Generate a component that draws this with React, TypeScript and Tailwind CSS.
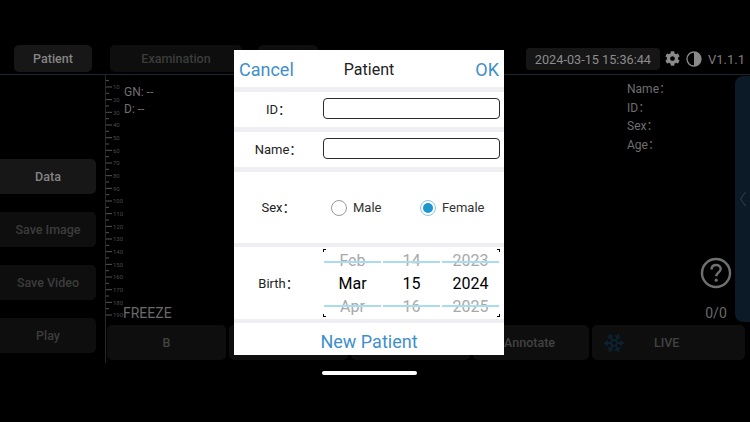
import { Snowflake } from "lucide-react";
import { FaCog } from "react-icons/fa";

const rulerMarks = Array.from({ length: 39 }, (_, i) => i);
const blue = "text-[#3f8fca]";

function SideButton({ label, active }: { label: string; active?: boolean }) {
  return (
    <div
      className={`flex h-[35px] w-[96px] items-center justify-center rounded-r-[5px] pt-[1px] text-[12.5px] font-medium ${
        active ? "bg-[#171717] text-[#858585]" : "bg-[#0e0e0e] text-[#3c3c3c]"
      }`}
    >
      {label}
    </div>
  );
}

function BottomButton({ label }: { label: string }) {
  return (
    <div className="flex h-full w-[119px] items-center justify-center rounded-[5px] bg-[#0e0e0e] pt-[1px] text-[12.5px] font-medium text-[#424242]">
      {label}
    </div>
  );
}

function Ruler() {
  return (
    <svg width="26" height="250" className="shrink-0" viewBox="0 0 26 250">
      {rulerMarks.map((i) => {
        const y = i * 6.335 - 0.7;
        const major = i % 2 === 0 && i > 0;
        return (
          <g key={i}>
            <line x1="0" x2={major ? 6 : 3} y1={y} y2={y} stroke="#565656" strokeWidth="1" />
            {major && (
              <text x="7" y={y + 2.2} fontSize="6" fill="#4a4a4a" fontFamily="Roboto, sans-serif">
                {i * 5}
              </text>
            )}
          </g>
        );
      })}
    </svg>
  );
}

function FormLabel({ children }: { children: string }) {
  return <div className="mt-[1px] w-[89px] shrink-0 text-center text-[13px] text-[#222]">{children}</div>;
}

function Separator({ h }: { h: string }) {
  return <div className={`${h} shrink-0 bg-[#eeeef3]`} />;
}

function PickerColumn({ values }: { values: string[] }) {
  return (
    <div className="flex h-full flex-1 flex-col items-center justify-center gap-[2px] text-[16px] leading-[21px]">
      <span className="text-[#a9a9a9]">{values[0]}</span>
      <span className="text-black">{values[1]}</span>
      <span className="text-[#a9a9a9]">{values[2]}</span>
    </div>
  );
}

function Radio({ label, checked }: { label: string; checked?: boolean }) {
  return (
    <div className="flex items-center gap-[6px] text-[13px] text-[#333]">
      <span
        className={`flex h-[16px] w-[16px] items-center justify-center rounded-full border ${
          checked ? "border-[#8fc4de]" : "border-[#9a9a9a]"
        }`}
      >
        {checked && <span className="h-[10px] w-[10px] rounded-full bg-[#1e96cf]" />}
      </span>
      {label}
    </div>
  );
}

function PatientModal() {
  return (
    <div className="absolute left-[234px] top-[50px] flex h-[305px] w-[270px] flex-col bg-white">
      <div className="flex h-[37px] shrink-0 items-center px-[5px] pt-[2px]">
        <span className={`flex-1 text-[18px] ${blue}`}>Cancel</span>
        <span className="text-[16px] text-[#222]">Patient</span>
        <span className={`flex-1 text-right text-[18px] ${blue}`}>OK</span>
      </div>
      <Separator h="h-[5px]" />
      <div className="flex h-[35px] shrink-0 items-center">
        <FormLabel>ID：</FormLabel>
        <div className="mb-[2px] h-[21px] w-[177px] rounded-[4px] border-[1.5px] border-[#2a2a2a]" />
      </div>
      <Separator h="h-[5px]" />
      <div className="flex h-[35px] shrink-0 items-center">
        <FormLabel>Name：</FormLabel>
        <div className="mb-[2px] h-[21px] w-[177px] rounded-[4px] border-[1.5px] border-[#2a2a2a]" />
      </div>
      <Separator h="h-[5px]" />
      <div className="flex h-[71px] shrink-0 items-center">
        <FormLabel>Sex：</FormLabel>
        <div className="ml-[8px] w-[89px]">
          <Radio label="Male" />
        </div>
        <Radio label="Female" checked />
      </div>
      <Separator h="h-[4px]" />
      <div className="flex h-[72px] shrink-0 items-center">
        <FormLabel>Birth：</FormLabel>
        <div className="relative h-[68px] w-[177px] overflow-hidden">
          <div className="flex h-full">
            <PickerColumn values={["Feb", "Mar", "Apr"]} />
            <PickerColumn values={["14", "15", "16"]} />
            <PickerColumn values={["2023", "2024", "2025"]} />
          </div>
          <div className="absolute inset-x-[1px] top-[12px] flex gap-[2px]">
            <div className="h-[1.5px] flex-1 bg-[#a9dcee]" />
            <div className="h-[1.5px] flex-1 bg-[#a9dcee]" />
            <div className="h-[1.5px] flex-1 bg-[#a9dcee]" />
          </div>
          <div className="absolute inset-x-[1px] top-[56px] flex gap-[2px]">
            <div className="h-[1.5px] flex-1 bg-[#a9dcee]" />
            <div className="h-[1.5px] flex-1 bg-[#a9dcee]" />
            <div className="h-[1.5px] flex-1 bg-[#a9dcee]" />
          </div>
          <span className="absolute left-0 top-0 h-[3px] w-[3px] border-l border-t border-black" />
          <span className="absolute right-0 top-0 h-[3px] w-[3px] border-r border-t border-black" />
          <span className="absolute bottom-0 left-0 h-[3px] w-[3px] border-b border-l border-black" />
          <span className="absolute bottom-0 right-0 h-[3px] w-[3px] border-b border-r border-black" />
        </div>
      </div>
      <Separator h="h-[4px]" />
      <div className={`flex flex-1 items-center justify-center pt-[4px] text-[18px] ${blue}`}>New Patient</div>
    </div>
  );
}

export default function App() {
  return (
    <div
      className="relative h-[422px] w-[750px] overflow-hidden bg-black pt-[45px]"
      style={{ fontFamily: "Roboto, 'Noto Sans CJK SC', sans-serif" }}
    >
      {/* Top bar */}
      <div className="flex h-[30px] items-start border-b border-[#1b2630] pl-[14px] pr-[5px]">
        <div className="flex h-[27px] w-[78px] items-center justify-center rounded-[5px] bg-[#171717] pt-[1px] text-[12.5px] font-medium text-[#858585]">
          Patient
        </div>
        <div className="ml-[18px] flex h-[27px] w-[132px] items-center justify-center rounded-[5px] bg-[#0e0e0e] pt-[1px] text-[12.5px] font-medium text-[#3c3c3c]">
          Examination
        </div>
        <div className="ml-[16px] h-[27px] w-[60px] rounded-[5px] bg-[#0e0e0e]" />
        <div className="ml-auto mt-[3px] flex h-[22px] w-[134px] items-center justify-center rounded-[4px] bg-[#161616] pt-[1px] text-[12.7px] text-[#8c8c8c]">
          2024-03-15 15:36:44
        </div>
        <FaCog size={15} className="ml-[5px] mt-[6px] text-[#8a8a8a]" />
        <svg width="16" height="16" viewBox="0 0 16 16" className="ml-[6px] mt-[6px]">
          <circle cx="8" cy="8" r="7" fill="none" stroke="#8a8a8a" strokeWidth="1.3" />
          <path d="M8 1a7 7 0 0 1 0 14z" fill="#8a8a8a" />
        </svg>
        <span className="ml-[6px] mt-[5px] text-[13px] text-[#7d7d7d]">V1.1.1</span>
      </div>

      <div className="flex h-[288px]">
        {/* Left buttons */}
        <div className="flex w-[105px] shrink-0 flex-col justify-end gap-[18px] pb-[10px]">
          <SideButton label="Data" active />
          <SideButton label="Save Image" />
          <SideButton label="Save Video" />
          <SideButton label="Play" />
        </div>

        {/* Main area */}
        <div className="flex-1 border-l border-[#23282e]">
          <div className="flex h-[250px]">
            <Ruler />
            <div className="flex flex-col justify-between pb-[4px]">
              <div className="-ml-[8px] flex flex-col gap-[3px] pt-[10px] text-[12px] leading-[14px] text-[#6f6f6f]">
                <span>GN: --</span>
                <span>D: --</span>
              </div>
              <span className="-ml-[9px] text-[14px] leading-[16px] text-[#6a6a6a]">FREEZE</span>
            </div>
            <div className="flex-1" />
            <div className="mr-[29px] flex flex-col gap-[4px] pt-[7px] text-[12px] leading-[14.5px] text-[#6f6f6f]">
              <span>Name：</span>
              <span>ID：</span>
              <span>Sex：</span>
              <span>Age：</span>
            </div>
            <div className="mr-[3px] flex flex-col items-center justify-end pb-[4px]">
              <svg width="32" height="32" viewBox="0 0 32 32" className="mb-[16px]">
                <circle cx="16" cy="16" r="14" fill="none" stroke="#707070" strokeWidth="2.4" />
                <path
                  d="M11.5 12.6c0-3 2.1-4.6 4.7-4.6s4.5 1.7 4.5 4c0 3.3-4.3 3.5-4.5 7.2"
                  fill="none"
                  stroke="#707070"
                  strokeWidth="2.4"
                />
                <circle cx="16.2" cy="23.2" r="1.6" fill="#707070" />
              </svg>
              <span className="text-[14px] leading-[16px] text-[#6a6a6a]">0/0</span>
            </div>
            <div className="mt-[1px] flex h-[246px] w-[15px] items-center justify-center rounded-l-[8px] bg-[#0b1a26]">
              <svg width="8" height="16" viewBox="0 0 8 16">
                <path d="M6.5 1 1.5 8l5 7" fill="none" stroke="#2c4152" strokeWidth="1" />
              </svg>
            </div>
          </div>
          <div className="flex h-[35px] gap-[3px] pl-[1px] pr-[5px]">
            <BottomButton label="B" />
            <BottomButton label="" />
            <BottomButton label="" />
            <div className="flex h-full w-[116px] items-center justify-end rounded-[5px] bg-[#0e0e0e] pr-[34px] pt-[1px] text-[12.5px] font-medium text-[#424242]">
              Annotate
            </div>
            <div className="flex h-full flex-1 items-center rounded-[5px] bg-[#0e0e0e] pl-[11px] pt-[1px] text-[12.5px] font-medium text-[#424242]">
              <Snowflake size={22} className="text-[#0d2231]" />
              <span className="ml-[29px]">LIVE</span>
            </div>
          </div>
        </div>
      </div>

      <PatientModal />

      {/* Home indicator */}
      <div className="absolute left-[322px] top-[371px] h-[4px] w-[95px] rounded-full bg-white" />
    </div>
  );
}
